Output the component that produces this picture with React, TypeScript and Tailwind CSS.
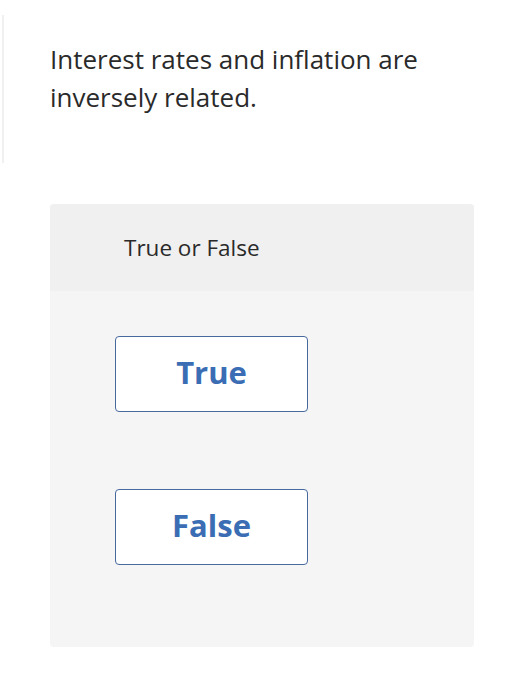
export default function App() {
  return (
    <div
      className="relative h-[700px] w-[517px] bg-white text-[#222]"
      style={{ fontFamily: "'Open Sans', Lato, sans-serif" }}
    >
      <div className="absolute left-[2px] top-[15px] h-[148px] w-[2px] bg-[#f0f0f0]" />

      <div className="pt-[40px] pl-[50px] pr-[60px]">
        <p className="text-[26px] leading-[38px] text-[#2a2a2a] [font-variant-ligatures:none]">
          Interest rates and inflation are inversely related.
        </p>
      </div>

      <div className="mt-[88px] ml-[50px] w-[424px] overflow-hidden rounded-[4px] bg-[#f5f5f6]">
        <div className="flex h-[87px] items-center bg-[#f0f0f0] pl-[74px]">
          <span className="text-[22.5px] text-[#2a2a2a]">True or False</span>
        </div>
        <div className="flex flex-col gap-[77px] pt-[45px] pb-[82px] pl-[65px]">
          {["True", "False"].map((label) => (
            <button
              key={label}
              className="flex h-[76px] w-[193px] items-center justify-center rounded-[4px] border-[1.5px] border-[#46699e] bg-white pb-[3px] text-[31px] font-bold text-[#3a6db3]"
            >
              {label}
            </button>
          ))}
        </div>
      </div>
    </div>
  );
}
